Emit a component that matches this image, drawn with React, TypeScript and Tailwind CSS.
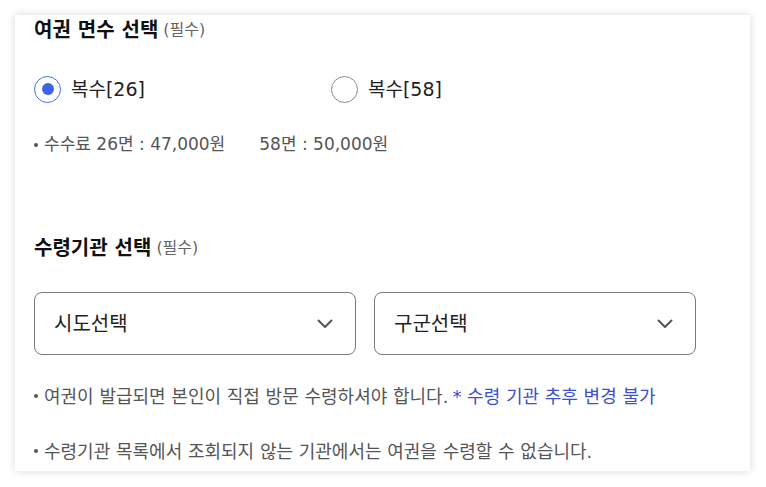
import React from "react";

const font = { fontFamily: '"DejaVu Sans", "Noto Sans CJK KR", sans-serif' };

function Radio({ checked, label }: { checked: boolean; label: string }) {
  return (
    <div className="flex items-center gap-[10px]">
      <span
        className={
          checked
            ? "flex h-[27px] w-[27px] items-center justify-center rounded-full border-[1.5px] border-[#4a6cf0] bg-white"
            : "flex h-[27px] w-[27px] items-center justify-center rounded-full border border-[#8a8a8a] bg-white"
        }
      >
        {checked && <span className="h-[12px] w-[12px] rounded-full bg-[#3d63e6]" />}
      </span>
      <span className="text-[19px] leading-[30px] text-[#222]">{label}</span>
    </div>
  );
}

function Select({ label }: { label: string }) {
  return (
    <div className="flex h-[63px] w-[322px] items-center justify-between rounded-[8px] border border-[#7a7a7a] pl-[19px] pr-[22px]">
      <span className="text-[20px] text-[#222]">{label}</span>
      <svg width="16" height="10" viewBox="0 0 16 10" fill="none">
        <path d="M1.5 1.5 L8 8 L14.5 1.5" stroke="#555" strokeWidth="2" strokeLinecap="round" strokeLinejoin="round" />
      </svg>
    </div>
  );
}

function Dot() {
  return <span className="mr-[6px] h-[4px] w-[4px] shrink-0 rounded-full bg-[#555]" />;
}

export default function App() {
  return (
    <div className="min-h-[487px] w-[766px] bg-white pt-[15px]" style={font}>
      <div className="ml-[15px] flex h-[456px] w-[735px] flex-col bg-white pl-[19px] shadow-[0_0_8px_rgba(0,0,0,0.16)]">
        <div className="flex h-[30px] items-center gap-[5px]">
          <span className="text-[20px] font-bold text-[#111]">여권 면수 선택</span>
          <span className="text-[16px] text-[#666]">(필수)</span>
        </div>
        <div className="mt-[29px] flex h-[30px] items-center">
          <div className="w-[297px]">
            <Radio checked label="복수[26]" />
          </div>
          <Radio checked={false} label="복수[58]" />
        </div>
        <div className="mt-[29px] flex h-[24px] items-center text-[17px] text-[#555]">
          <Dot />
          <span>수수료 26면 : 47,000원</span>
          <span className="ml-[34px]">58면 : 50,000원</span>
        </div>
        <div className="mt-[76px] flex h-[30px] items-center gap-[5px]">
          <span className="text-[20px] font-bold text-[#111]">수령기관 선택</span>
          <span className="text-[16px] text-[#666]">(필수)</span>
        </div>
        <div className="mt-[29px] flex gap-[18px]">
          <Select label="시도선택" />
          <Select label="구군선택" />
        </div>
        <div className="mt-[29px] flex h-[24px] items-center text-[18px] text-[#555]">
          <Dot />
          <span>여권이 발급되면 본인이 직접 방문 수령하셔야 합니다.</span>
          <span className="ml-[4px] text-[#3d4fce]">* 수령 기관 추후 변경 불가</span>
        </div>
        <div className="mt-[31px] flex h-[24px] items-center text-[18px] text-[#555]">
          <Dot />
          <span>수령기관 목록에서 조회되지 않는 기관에서는 여권을 수령할 수 없습니다.</span>
        </div>
      </div>
    </div>
  );
}
